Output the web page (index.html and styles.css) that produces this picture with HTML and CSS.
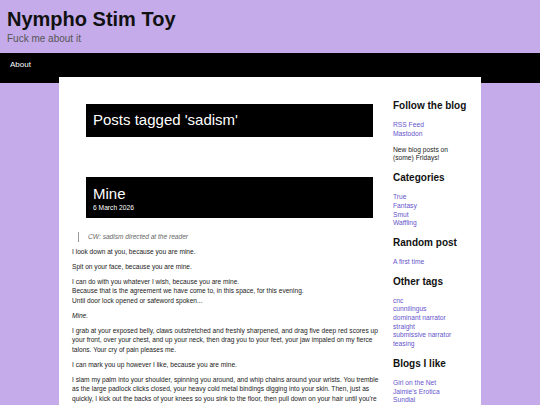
FILE: index.html
```html
<!DOCTYPE html>
<html lang="en">
<head>
<meta charset="utf-8">
<title>Nympho Stim Toy</title>
<link rel="stylesheet" href="styles.css">
</head>
<body>
<header class="site-header">
  <h1 class="site-title">Nympho Stim Toy</h1>
  <p class="site-tagline">Fuck me about it</p>
</header>
<nav class="site-nav">
  <a class="nav-link" href="#">About</a>
</nav>
<div class="page">
  <main class="content">
    <h1 class="title-box page-title">Posts tagged 'sadism'</h1>
    <article class="post">
      <div class="title-box post-head">
        <h2 class="post-title">Mine</h2>
        <div class="post-date">6 March 2026</div>
      </div>
      <div class="post-body">
        <blockquote class="cw"><em>CW: sadism directed at the reader</em></blockquote>
        <p>I look down at you, because you are mine.</p>
        <p>Spit on your face, because you are mine.</p>
        <p>I can do with you whatever I wish, because you are mine.<br>Because that is the agreement we have come to, in this space, for this evening.<br>Until door lock opened or safeword spoken...</p>
        <p><em>Mine.</em></p>
        <p>I grab at your exposed belly, claws outstretched and freshly sharpened, and drag five deep red scores up your front, over your chest, and up your neck, then drag you to your feet, your jaw impaled on my fierce talons. Your cry of pain pleases me.</p>
        <p>I can mark you up however I like, because you are mine.</p>
        <p>I slam my palm into your shoulder, spinning you around, and whip chains around your wrists. You tremble as the large padlock clicks closed, your heavy cold metal bindings digging into your skin. Then, just as quickly, I kick out the backs of your knees so you sink to the floor, then pull down on your hair until you're looking up at me, wide-eyed, your throat bared and trembling beneath my gaze.</p>
      </div>
    </article>
  </main>
  <aside class="sidebar">
    <section class="widget">
      <h3 class="widget-title">Follow the blog</h3>
      <ul class="widget-list">
        <li><a href="#">RSS Feed</a></li>
        <li><a href="#">Mastodon</a></li>
      </ul>
      <p class="widget-text">New blog posts on (some) Fridays!</p>
    </section>
    <section class="widget">
      <h3 class="widget-title">Categories</h3>
      <ul class="widget-list">
        <li><a href="#">True</a></li>
        <li><a href="#">Fantasy</a></li>
        <li><a href="#">Smut</a></li>
        <li><a href="#">Waffling</a></li>
      </ul>
    </section>
    <section class="widget">
      <h3 class="widget-title">Random post</h3>
      <ul class="widget-list">
        <li><a href="#">A first time</a></li>
      </ul>
    </section>
    <section class="widget">
      <h3 class="widget-title">Other tags</h3>
      <ul class="widget-list">
        <li><a href="#">cnc</a></li>
        <li><a href="#">cunnilingus</a></li>
        <li><a href="#">dominant narrator</a></li>
        <li><a href="#">straight</a></li>
        <li><a href="#">submissive narrator</a></li>
        <li><a href="#">teasing</a></li>
      </ul>
    </section>
    <section class="widget">
      <h3 class="widget-title">Blogs I like</h3>
      <ul class="widget-list">
        <li><a href="#">Girl on the Net</a></li>
        <li><a href="#">Jaimie's Erotica</a></li>
        <li><a href="#">Sundial</a></li>
      </ul>
    </section>
  </aside>
</div>
</body>
</html>
```
FILE: styles.css
```css
html, body {
  margin: 0;
  padding: 0;
}
body {
  background: #c5abe9;
  font-family: "Liberation Sans", Arial, sans-serif;
  color: #222;
}
.site-header {
  padding: 8px 7px 7px;
  height: 38px;
}
.site-title {
  margin: 0;
  font-size: 20px;
  line-height: 23px;
  font-weight: bold;
  color: #111;
}
.site-tagline {
  margin: 2px 0 0;
  font-size: 10px;
  line-height: 12px;
  color: #555;
}
.site-nav {
  background: #000;
  height: 30px;
  box-sizing: border-box;
  padding: 7px 10px;
}
.nav-link {
  color: #fff;
  text-decoration: none;
  font-size: 8px;
  line-height: 10px;
  display: block;
}
.page {
  width: 422px;
  box-sizing: border-box;
  margin: -6px auto 0;
  background: #fff;
  padding: 23px 13px 40px;
  display: flex;
  gap: 13px;
  align-items: flex-start;
}
.content {
  width: 308px;
  flex: none;
  margin-top: 4px;
}
.title-box {
  background: #000;
  color: #fff;
  margin: 0 7px 0 14px;
}
.page-title {
  font-size: 15px;
  line-height: 19px;
  font-weight: normal;
  padding: 6px 7px 8px;
  margin-bottom: 40px;
}
.post-head {
  padding: 8px 7px 6px;
}
.post-title {
  margin: 0;
  font-size: 15px;
  line-height: 18px;
  font-weight: normal;
}
.post-date {
  font-size: 6.7px;
  line-height: 9px;
}
.post-body {
  margin-top: 14.25px;
  font-size: 6.6px;
  line-height: 9.5px;
  color: #222;
}
.cw {
  margin: 0 0 5px 6px;
  padding-left: 9px;
  border-left: 1px solid #999;
  color: #666;
}
.post-body p {
  margin: 0 0 5.5px;
}
.sidebar {
  width: 75px;
  flex: none;
  font-size: 6.7px;
  line-height: 8.7px;
  color: #222;
}
.widget {
  margin-bottom: 9px;
}
.widget-title {
  margin: 0 0 9px;
  font-size: 10px;
  line-height: 12px;
  font-weight: bold;
  color: #111;
}
.widget-list {
  list-style: none;
  margin: 0;
  padding: 0;
}
.widget-list a {
  color: #6655cc;
  text-decoration: none;
}
.widget-text {
  margin: 7.3px 0 0;
}
```
